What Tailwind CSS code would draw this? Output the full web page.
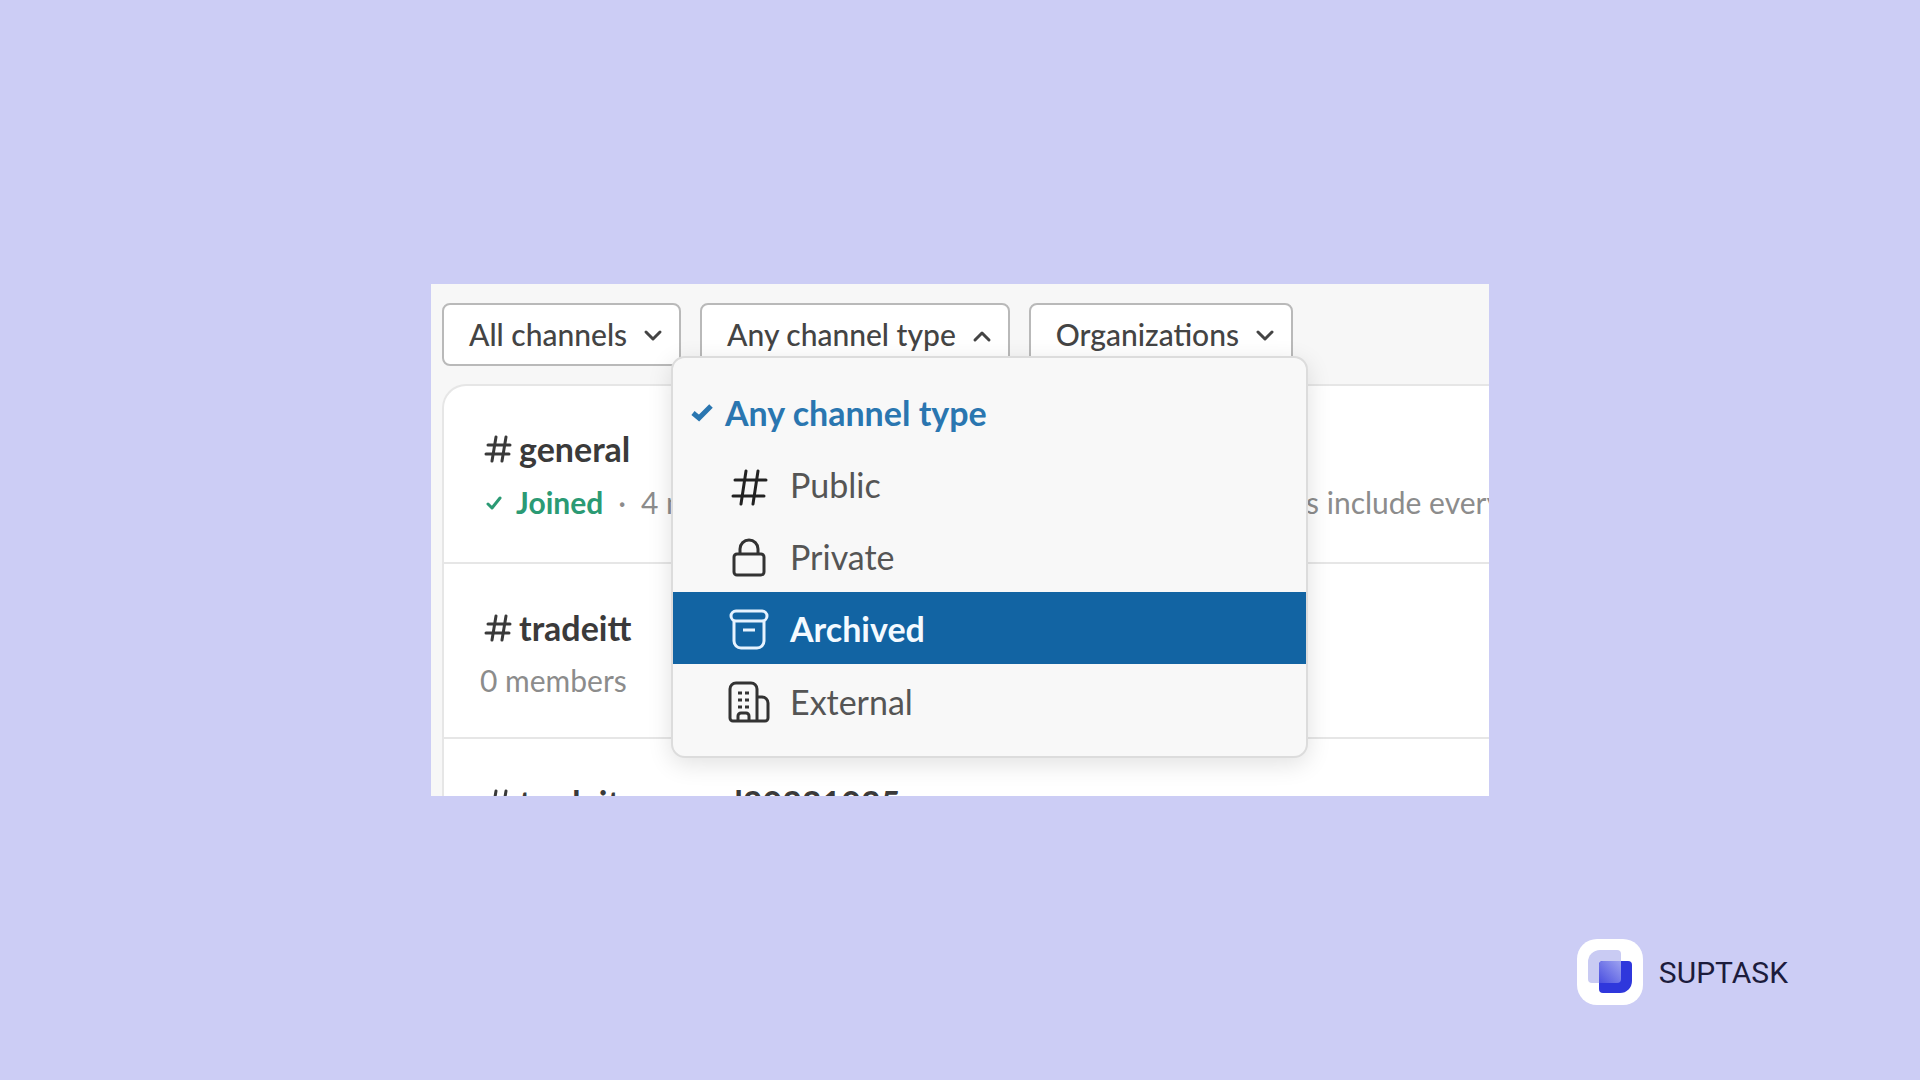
<!DOCTYPE html>
<html lang="en">
  <head>
    <meta charset="UTF-8" />
    <meta name="viewport" content="width=device-width, initial-scale=1.0" />
    <title>Browse channels</title>
    <script src="https://cdn.jsdelivr.net/npm/@tailwindcss/browser@4"></script>
  </head>
  <body class="relative min-h-screen flex items-center justify-center bg-[#cccdf5] font-['Lato',sans-serif]">
    <!-- Channel browser -->
    <main class="relative w-[1058px] max-w-full h-[512px] bg-[#f7f7f7] overflow-hidden">
      <!-- Filters -->
      <div class="flex gap-[19px] pl-[11px] pt-[19px] text-[30px] font-medium text-[#444]">
        <button class="h-[63px] pl-[25px] pr-4 flex items-center gap-4 bg-white border-2 border-[#b9b9b9] rounded-lg">
          All channels
          <svg class="w-5 h-5" viewBox="0 0 20 20" fill="none" stroke="currentColor" stroke-width="3" stroke-linecap="round" stroke-linejoin="round"><path d="M3 7l7 7 7-7" /></svg>
        </button>
        <button class="h-[63px] pl-[25px] pr-4 flex items-center gap-4 bg-white border-2 border-[#b9b9b9] rounded-lg" aria-expanded="true">
          Any channel type
          <svg class="w-5 h-5" viewBox="0 0 20 20" fill="none" stroke="currentColor" stroke-width="3" stroke-linecap="round" stroke-linejoin="round"><path d="M3 15l7-7 7 7" /></svg>
        </button>
        <button class="h-[63px] pl-[25px] pr-4 flex items-center gap-4 bg-white border-2 border-[#b9b9b9] rounded-lg">
          Organizations
          <svg class="w-5 h-5" viewBox="0 0 20 20" fill="none" stroke="currentColor" stroke-width="3" stroke-linecap="round" stroke-linejoin="round"><path d="M3 7l7 7 7-7" /></svg>
        </button>
      </div>

      <!-- Channel list -->
      <ul class="ml-[11px] mt-[18px] bg-white border-t-2 border-l-2 border-[#e6e6e6] rounded-tl-[24px] whitespace-nowrap">
        <li class="h-[178px] pl-9 pt-[43px] border-b-2 border-[#e6e6e6]">
          <a href="#general" class="pl-1 flex items-center gap-[7px] text-[34px] leading-10 font-bold text-[#3a3a3a]">
            <svg class="w-7 h-7" viewBox="0 0 28 28" fill="none" stroke="currentColor" stroke-width="3" stroke-linecap="round"><path d="M12 2L8 26M22 2L18 26M4 10H26M2 19H25" /></svg>
            general
          </a>
          <p class="pl-1 flex items-center mt-[13px] text-[30px] leading-10 text-[#8c8c8c]">
            <svg class="w-5 h-5 mr-3 shrink-0" viewBox="0 0 20 20" fill="none" stroke="#2b9a74" stroke-width="3" stroke-linecap="round" stroke-linejoin="round"><path d="M4 12l4 4 8-10" /></svg>
            <span class="font-bold text-[#2b9a74]">Joined</span>
            <span class="mx-[15px]">·</span>
            <span>4 members · This is the one channel that will always include everyone</span>
          </p>
        </li>
        <li class="h-[175px] pl-9 pt-11 border-b-2 border-[#e6e6e6]">
          <a href="#tradeitt" class="pl-1 flex items-center gap-[7px] text-[34px] leading-10 font-bold text-[#3a3a3a]">
            <svg class="w-7 h-7" viewBox="0 0 28 28" fill="none" stroke="currentColor" stroke-width="3" stroke-linecap="round"><path d="M12 2L8 26M22 2L18 26M4 10H26M2 19H25" /></svg>
            tradeitt
          </a>
          <p class="mt-3 text-[30px] leading-10 text-[#8c8c8c]">0 members</p>
        </li>
        <li class="h-[175px] pl-9 pt-11">
          <a href="#tradeit-unused20231025" class="pl-1 flex items-center gap-[7px] text-[34px] leading-10 font-bold text-[#3a3a3a]">
            <svg class="w-7 h-7" viewBox="0 0 28 28" fill="none" stroke="currentColor" stroke-width="3" stroke-linecap="round"><path d="M12 2L8 26M22 2L18 26M4 10H26M2 19H25" /></svg>
            tradeit-unused20231025
          </a>
        </li>
      </ul>

      <!-- Channel type menu -->
      <div role="menu" class="absolute left-[240px] top-[72px] w-[637px] pt-[18px] pb-5 bg-[#f8f8f8] border-2 border-[#dcdcdc] rounded-[14px] shadow-[0_6px_24px_rgba(0,0,0,0.12)] text-[34px] text-[#555]">
        <button role="menuitem" class="w-full h-[72px] pt-px pl-[18px] flex items-center gap-3 font-bold text-[#2a76b0]">
          <svg class="w-[22px] h-[22px]" viewBox="0 0 22 22" fill="none" stroke="currentColor" stroke-width="5"><path d="M2 11l6 5L20 4" /></svg>
          Any channel type
        </button>
        <button role="menuitem" class="w-full h-[72px] pt-px pl-[55px] flex items-center gap-5">
          <svg class="w-[42px] h-[42px] text-[#222]" viewBox="0 0 42 42" fill="none" stroke="currentColor" stroke-width="3" stroke-linecap="round"><path d="M18 7L13 40M30 7L25 40M7 16H38M5 32H36" /></svg>
          Public
        </button>
        <button role="menuitem" class="w-full h-[72px] pt-px pl-[55px] flex items-center gap-5">
          <svg class="w-[42px] h-[42px] text-[#333]" viewBox="0 0 42 42" fill="none" stroke="currentColor" stroke-width="3"><rect x="6" y="18" width="30" height="21" rx="3" /><path d="M12 18V13a9 9 0 0 1 18 0V18" /></svg>
          Private
        </button>
        <button role="menuitem" class="w-full h-[72px] pt-px pl-[55px] flex items-center gap-5 bg-[#1264a3] font-bold text-[#f4faff]">
          <svg class="w-[42px] h-[42px] text-[#e6f3ff]" viewBox="0 0 42 42" fill="none" stroke="currentColor" stroke-width="3"><rect x="3" y="3" width="36" height="10" rx="5" /><path d="M6 13V33a7 7 0 0 0 7 7H29a7 7 0 0 0 7-7V13M15 22H27" /></svg>
          Archived
        </button>
        <button role="menuitem" class="w-full h-[72px] pt-[3px] pl-[55px] flex items-center gap-5">
          <svg class="w-[42px] h-[42px] text-[#333]" viewBox="0 0 42 42" fill="none" stroke="currentColor" stroke-width="3"><path d="M29 40H5a3 3 0 0 1-3-3V8a6 6 0 0 1 6-6H23a6 6 0 0 1 6 6V40H37a3 3 0 0 0 3-3V22a6 6 0 0 0-6-6H29M10 40V35a3 3 0 0 1 3-3H18a3 3 0 0 1 3 3V40" /><path d="M10 12h4M17 12h4M10 19h4M17 19h4M10 26h4M17 26h4" /></svg>
          External
        </button>
      </div>
    </main>

    <!-- Brand -->
    <a href="#" class="absolute right-[132px] bottom-[75px] flex items-center gap-4 font-['Roboto',sans-serif] text-[30px] text-[#1c1c3c]">
      <svg class="w-[66px] h-[66px]" viewBox="0 0 66 66">
        <defs>
          <linearGradient id="overlap" x1="0" y1="1" x2="1" y2="0"><stop offset="0" stop-color="#4a4fe0" /><stop offset="1" stop-color="#9da2f0" /></linearGradient>
        </defs>
        <rect width="66" height="66" rx="20" fill="#fff" />
        <path d="M23 11H40a4 4 0 0 1 4 4V40a4 4 0 0 1-4 4H15a4 4 0 0 1-4-4V23A12 12 0 0 1 23 11Z" fill="#c9cbf3" />
        <path d="M26 22H51a4 4 0 0 1 4 4V42A12 12 0 0 1 43 54H26a4 4 0 0 1-4-4V26a4 4 0 0 1 4-4Z" fill="#2f37dc" />
        <path d="M26 22H44V40a4 4 0 0 1-4 4H22V26a4 4 0 0 1 4-4Z" fill="url(#overlap)" />
      </svg>
      SUPTASK
    </a>
  </body>
</html>
